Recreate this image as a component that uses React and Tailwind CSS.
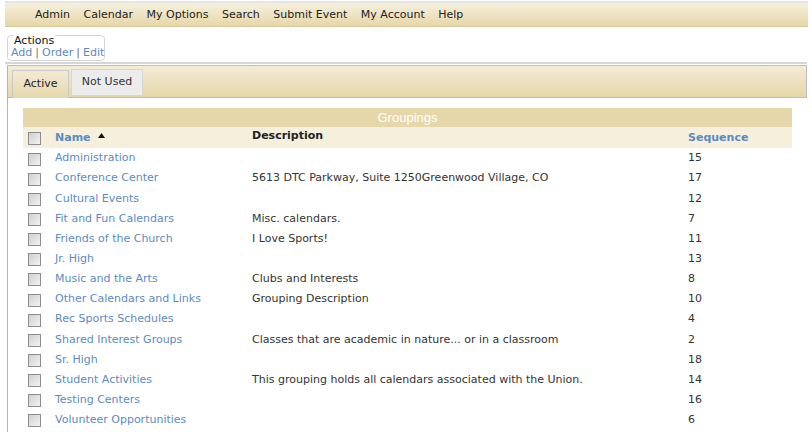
const menu = ["Admin", "Calendar", "My Options", "Search", "Submit Event", "My Account", "Help"];

const groupings = [
  { name: "Administration", desc: "", seq: 15 },
  { name: "Conference Center", desc: "5613 DTC Parkway, Suite 1250Greenwood Village, CO", seq: 17 },
  { name: "Cultural Events", desc: "", seq: 12 },
  { name: "Fit and Fun Calendars", desc: "Misc. calendars.", seq: 7 },
  { name: "Friends of the Church", desc: "I Love Sports!", seq: 11 },
  { name: "Jr. High", desc: "", seq: 13 },
  { name: "Music and the Arts", desc: "Clubs and Interests", seq: 8 },
  { name: "Other Calendars and Links", desc: "Grouping Description", seq: 10 },
  { name: "Rec Sports Schedules", desc: "", seq: 4 },
  { name: "Shared Interest Groups", desc: "Classes that are academic in nature... or in a classroom", seq: 2 },
  { name: "Sr. High", desc: "", seq: 18 },
  { name: "Student Activities", desc: "This grouping holds all calendars associated with the Union.", seq: 14 },
  { name: "Testing Centers", desc: "", seq: 16 },
  { name: "Volunteer Opportunities", desc: "", seq: 6 },
];

function Checkbox() {
  return (
    <span className="block w-[13px] h-[13px] border border-[#8c8c8c] bg-gradient-to-br from-[#d0d0d0] to-[#f2f2f2] mt-[4px]" />
  );
}

export default function App() {
  return (
    <div className="w-[812px] h-[432px] overflow-hidden bg-white text-[11px] text-[#222] font-['DejaVu_Sans',Verdana,sans-serif]">
      {/* top menu */}
      <div className="mt-[1px] ml-[5px] mr-[4px] h-[26px] border-t-2 border-[#e4e4e4] border-b border-b-[#d8c79a] bg-gradient-to-b from-[#f6f0de] to-[#e6d6a8] flex items-center pl-[30px] gap-[13.5px]">
        {menu.map((m) => (
          <span key={m} className="leading-none">{m}</span>
        ))}
      </div>

      {/* actions */}
      <div className="relative ml-[7px] mt-[8px] w-[98px] h-[26px] border border-[#d4d4d4] rounded-[4px]">
        <span className="absolute left-[5px] -top-[1px] px-[1px] bg-white leading-[11px] text-[#111]">Actions</span>
        <div className="absolute left-[3px] top-[10px] whitespace-nowrap leading-[13px] text-[#5b8bc6] flex gap-[3px]">
          <span>Add</span>
          <span className="text-[#777]">|</span>
          <span>Order</span>
          <span className="text-[#777]">|</span>
          <span>Edit</span>
        </div>
      </div>

      <div className="ml-[5px] mr-[5px] mt-[1px] h-[2px] bg-[#d6d6d6]" />

      {/* tab panel */}
      <div className="ml-[7px] mt-[1px] h-[400px] border-l border-[#b5b5b5]">
        <div className="h-[33px] mr-[5px] border-t border-r border-b border-[#bdbdbd] bg-gradient-to-b from-[#f4ecd6] to-[#e6d6a9] flex items-end pl-[4px] gap-[2px]">
          <div className="h-[28px] w-[57px] -mb-[1px] border border-b-0 border-[#c9c9c9] bg-gradient-to-b from-[#f3ead2] to-[#e6d7ab] flex items-center justify-center">
            Active
          </div>
          <div className="h-[27px] w-[72px] border border-[#d6d6d6] bg-[#ececec] flex items-center justify-center text-[#333] mb-[1px]">
            Not Used
          </div>
        </div>

        {/* table */}
        <div className="ml-[15px] mt-[10px] w-[769px]">
          <div className="h-[19px] bg-[#e6d7ab] text-white text-[13px] font-['Liberation_Sans',Arial,sans-serif] flex items-center justify-center">
            Groupings
          </div>
          <div className="h-[21px] bg-[#f5efdc] grid grid-cols-[27px_197px_436px_1fr] items-center font-bold">
            <div className="pl-[5px] -mt-[3px]">
              <Checkbox />
            </div>
            <div className="pl-[5px] flex items-center text-[#5b8bc6] pt-[1px]">
              Name
              <svg width="7" height="5" viewBox="0 0 7 5" className="ml-[7px] -mt-[5px]">
                <polygon points="3.5,0 7,5 0,5" fill="#111" />
              </svg>
            </div>
            <div className="pl-[5px] -mt-[3px]">Description</div>
            <div className="pl-[5px] text-[#5b8bc6] pt-[1px]">Sequence</div>
          </div>
          <div className="mt-[0.5px]">
            {groupings.map((g) => (
              <div key={g.name} className="h-[20.15px] grid grid-cols-[27px_197px_436px_1fr] items-center">
                <div className="pl-[5px] -mt-[3px]">
                  <Checkbox />
                </div>
                <div className="pl-[5px] text-[#5b8bc6]">{g.name}</div>
                <div className="pl-[5px] text-[#333]">{g.desc}</div>
                <div className="pl-[5px] text-[#333]">{g.seq}</div>
              </div>
            ))}
          </div>
        </div>
      </div>
    </div>
  );
}
